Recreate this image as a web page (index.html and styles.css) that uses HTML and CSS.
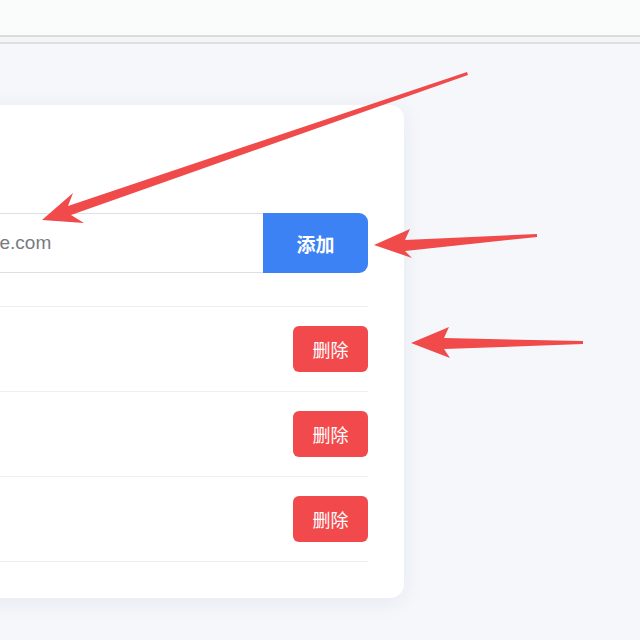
FILE: index.html
```html
<!DOCTYPE html>
<html lang="zh-CN">
<head>
<meta charset="utf-8">
<title>邮箱白名单</title>
<link rel="stylesheet" href="styles.css">
</head>
<body>
  <div class="topbar"></div>
  <div class="subbar"></div>
  <main class="page">
    <section class="card">
      <div class="card-head"></div>
      <form class="add-form">
        <input class="email-input" type="text" placeholder="user@example.com">
        <button class="btn btn-add" type="button">添加</button>
      </form>
      <ul class="list">
        <li class="row"><span class="email"></span><button class="btn btn-del" type="button">删除</button></li>
        <li class="row"><span class="email"></span><button class="btn btn-del" type="button">删除</button></li>
        <li class="row"><span class="email"></span><button class="btn btn-del" type="button">删除</button></li>
      </ul>
    </section>
  </main>
  <svg class="arrows" width="640" height="640" viewBox="0 0 640 640">
    <polygon points="42,220 73,193 68,206 467,72 468,75 71,215 84,223"/>
    <polygon points="374,245 410,229 405,240 537,234 537,237 405,251 412,258"/>
    <polygon points="411,343 449,327 444,338 583,341 583,344 444,349 450,358"/>
  </svg>
</body>
</html>
```
FILE: styles.css
```css
html, body {
  margin: 0;
  padding: 0;
}
body {
  width: 640px;
  height: 640px;
  overflow: hidden;
  position: relative;
  background: #f5f7fb;
  font-family: "Liberation Sans", "Noto Sans CJK SC", sans-serif;
}
.topbar {
  height: 35px;
  background: #fafbfb;
  border-bottom: 2px solid #d9dcdc;
}
.subbar {
  height: 5px;
  background: #f4f6f6;
  border-bottom: 2px solid #dde0e0;
}
.page {
  padding-top: 61px;
}
.card {
  margin-left: -171px;
  width: 575px;
  box-sizing: border-box;
  background: #ffffff;
  border-radius: 14px;
  padding: 36px 36px 36px 36px;
  box-shadow: 0 4px 22px rgba(30, 40, 70, 0.07);
}
.card-head {
  height: 72px;
}
.add-form {
  display: flex;
  height: 60px;
  margin: 0;
}
.email-input {
  flex: 1;
  min-width: 0;
  box-sizing: border-box;
  height: 60px;
  border: 1px solid #dcdfe3;
  border-right: none;
  border-radius: 8px 0 0 8px;
  padding: 0 16px;
  font-family: "Liberation Sans", "Noto Sans CJK SC", sans-serif;
  font-size: 19px;
  color: #333;
  outline: none;
}
.email-input::placeholder {
  color: #777b80;
}
.btn {
  border: none;
  color: #ffffff;
  font-family: "Noto Sans CJK SC", "Liberation Sans", sans-serif;
  cursor: pointer;
  padding: 0;
}
.btn-add {
  width: 105px;
  height: 60px;
  background: #3d82f4;
  border-radius: 0 9px 9px 0;
  font-size: 19px;
  font-weight: 700;
}
.list {
  list-style: none;
  margin: 33px 0 0 0;
  padding: 0;
  border-top: 1px solid #eceef1;
}
.row {
  display: flex;
  align-items: center;
  justify-content: space-between;
  height: 84px;
  border-bottom: 1px solid #eceef1;
}
.email {
  font-size: 16px;
  color: #333;
}
.btn-del {
  width: 75px;
  height: 46px;
  background: #f24a4c;
  border-radius: 6px;
  font-size: 18px;
  font-weight: 400;
}
.arrows {
  position: absolute;
  left: 0;
  top: 0;
  pointer-events: none;
}
.arrows polygon {
  fill: #f04a4a;
}
```
